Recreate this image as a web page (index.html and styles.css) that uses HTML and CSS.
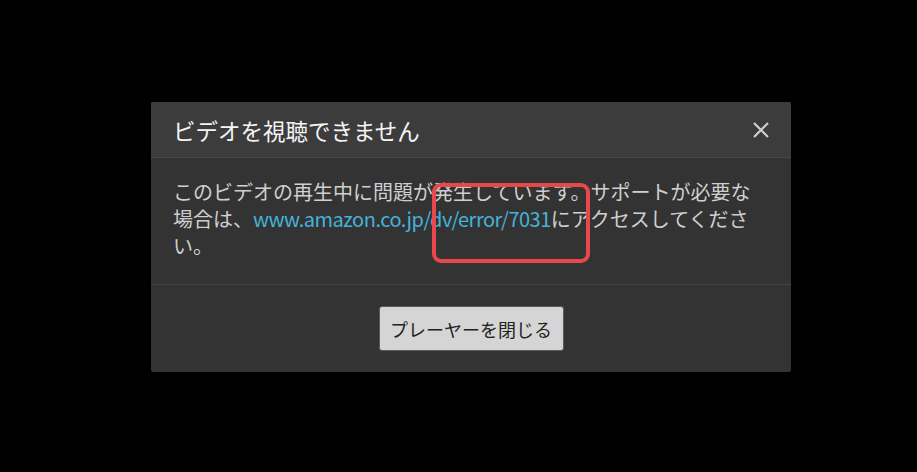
FILE: index.html
```html
<!DOCTYPE html>
<html lang="ja">
<head>
<meta charset="utf-8">
<title>ビデオを視聴できません</title>
<link rel="stylesheet" href="styles.css">
</head>
<body>
<div class="stage">
  <div class="dialog">
    <div class="header">
      <h1 class="title">ビデオを視聴できません</h1>
      <button class="close" aria-label="閉じる">
        <svg width="18" height="18" viewBox="0 0 18 18"><path d="M2 2L16 16M16 2L2 16" stroke="#d0d0d0" stroke-width="2.2" fill="none"/></svg>
      </button>
    </div>
    <div class="body">
      <p class="msg">このビデオの再生中に問題が発生しています。サポートが必要な場合は、<a class="link" href="#">www.amazon.co.jp/dv/error/7031</a>にアクセスしてください。</p>
      <div class="highlight"></div>
    </div>
    <div class="footer">
      <button class="btn">プレーヤーを閉じる</button>
    </div>
  </div>
</div>
</body>
</html>
```
FILE: styles.css
```css
html, body {
  margin: 0;
  padding: 0;
  background: #000;
  width: 917px;
  height: 472px;
  overflow: hidden;
  font-family: "Noto Sans CJK JP", "Noto Sans", sans-serif;
}
.stage {
  padding: 102px 0 0 151px;
}
.dialog {
  width: 640px;
  height: 270px;
  background: #333333;
  border-radius: 2px;
  display: flex;
  flex-direction: column;
}
.header {
  height: 55px;
  background: #3c3c3c;
  border-bottom: 1px solid #464646;
  display: flex;
  align-items: center;
  justify-content: space-between;
  padding: 0 21px 0 22px;
  border-radius: 2px 2px 0 0;
}
.title {
  margin: 0;
  font-size: 22.5px;
  font-weight: 400;
  color: #f4f4f4;
  line-height: 30px;
}
.close {
  background: none;
  border: 0;
  padding: 0;
  width: 18px;
  height: 18px;
  display: flex;
}
.body {
  position: relative;
  padding: 20px 22px 25px 22px;
  border-bottom: 1px solid #434343;
}
.msg {
  margin: 0;
  font-size: 20px;
  line-height: 27px;
  color: #cfcfcf;
}
.link {
  color: #45b2da;
  text-decoration: none;
  letter-spacing: -0.5px;
}
.highlight {
  position: absolute;
  left: 281px;
  top: 25px;
  width: 150px;
  height: 72px;
  border: 4px solid #e8484b;
  border-radius: 9px;
}
.footer {
  flex: 1;
  display: flex;
  justify-content: center;
  align-items: flex-start;
  padding-top: 21px;
}
.btn {
  width: 185px;
  height: 45px;
  background: #d5d5d5;
  border: 1px solid #5a5a5a;
  border-radius: 3px;
  font-family: "Noto Sans CJK JP", "Noto Sans", sans-serif;
  font-size: 18px;
  color: #222;
  padding: 0;
}
```
